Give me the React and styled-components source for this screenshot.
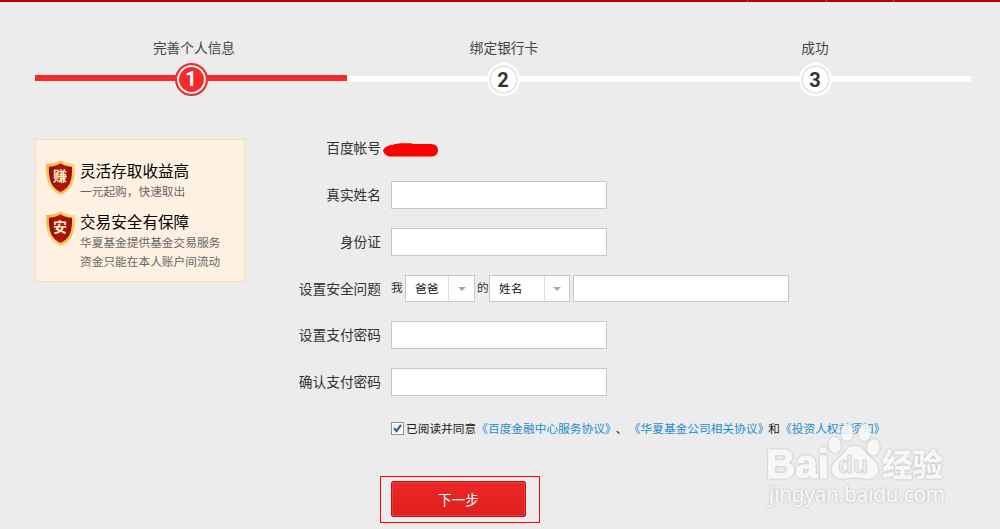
import React from "react";
import styled, { createGlobalStyle } from "styled-components";

const GlobalStyle = createGlobalStyle`
  * {
    box-sizing: border-box;
  }
  body {
    margin: 0;
    background: #ececec;
    color: #333;
    font-family: "Liberation Sans", "Noto Sans CJK SC", sans-serif;
    font-size: 11.7px;
  }
`;

const steps = [
  { title: "完善个人信息", active: true, shift: 3 },
  { title: "绑定银行卡", shift: 1 },
  { title: "成功", shift: 0 },
];

const Shield = ({ text }) => (
  <ShieldIcon width="30" height="35" viewBox="0 0 30 35">
    <defs>
      <linearGradient id="gold" x1="0" y1="0" x2="1" y2="1">
        <stop offset="0" stopColor="#f0a92e" />
        <stop offset="0.5" stopColor="#ffdc78" />
        <stop offset="1" stopColor="#f0a92e" />
      </linearGradient>
      <linearGradient id="red" x1="0" y1="0" x2="1" y2="0">
        <stop offset="0" stopColor="#8c0f0c" />
        <stop offset="0.5" stopColor="#b8140f" />
        <stop offset="1" stopColor="#930f0c" />
      </linearGradient>
    </defs>
    <path
      fill="url(#gold)"
      d="M14.500 0.3C10.500 2.9 5.500 4.2 0.3 4.1C0 12 0.2 19.5 3.3 25.2C5.8 29.7 9.8 33 14.5 34.8C19.2 33 23.2 29.7 25.7 25.2C28.8 19.5 29.1 12 28.7 4.1C23.5 4.2 18.5 2.9 14.5 0.3Z"
    />
    <path
      fill="url(#red)"
      d="M14.5 3.2C11.1 5.4 7 6.5 3 6.7C2.8 13 3.1 19 5.500 23.7C7.6 27.6 10.7 30.3 14.5 32C18.3 30.3 21.4 27.6 23.5 23.7C25.9 19 26.2 13 26 6.7C22 6.5 17.9 5.4 14.5 3.2Z"
    />
    <text x="14" y="20.5" textAnchor="middle" fontSize="14" fontWeight="bold" fill="#fff3c4">
      {text}
    </text>
  </ShieldIcon>
);

const Watermark = () => (
  <WatermarkLayer width="190" height="96" viewBox="760 420 190 96">
    <g
      fill="#f9f9f9"
      stroke="#f9f9f9"
      strokeWidth="1.4"
      strokeLinejoin="round"
      fontFamily="Liberation Sans"
      fontWeight="bold"
    >
      <text x="766" y="477.5" fontSize="41" textLength="63" lengthAdjust="spacingAndGlyphs">
        Bai
      </text>
      <g strokeWidth="0.4">
        <ellipse cx="834.7" cy="445" rx="6" ry="8" transform="rotate(-10 834.7 445)" />
        <ellipse cx="847" cy="432.5" rx="6" ry="8.5" />
        <ellipse cx="864.7" cy="432.5" rx="6" ry="8.5" transform="rotate(8 864.7 432.5)" />
        <ellipse cx="873.3" cy="447.5" rx="6.3" ry="8" transform="rotate(8 873.3 447.5)" />
        <path d="M854.5 446C848 446 846 451 842 455.5C837 460 831.5 463 832 470C832.5 477 839 479.5 845 478.5C852 477.3 857 477.3 864 478.5C871 479.5 878 477 878 469.5C878 462 871 459 867 454C863 449 861 446 854.5 446Z" />
      </g>
      <text
        x="838"
        y="472.5"
        fontSize="24"
        textLength="30"
        lengthAdjust="spacingAndGlyphs"
        fill="#efefef"
        stroke="#d2d2d2"
        strokeWidth="1"
      >
        du
      </text>
      <text x="882" y="475.5" fontSize="30.5" strokeWidth="0.6" fontFamily="Noto Sans CJK SC">
        经验
      </text>
    </g>
    <text
      x="769"
      y="502"
      fontSize="22"
      fontFamily="Noto Sans"
      textLength="176"
      lengthAdjust="spacingAndGlyphs"
      fill="#f9f9f9"
      stroke="#f9f9f9"
      strokeWidth="0.3"
    >
      jingyan.baidu.com
    </text>
  </WatermarkLayer>
);

const Select = ({ value, width, arrow }) => (
  <SelectBox $width={width}>
    <SelectValue>{value}</SelectValue>
    <SelectArrow $width={arrow}>
      <svg width="8" height="4" viewBox="0 0 8 4">
        <path d="M0 0H8L4 4Z" fill="#aaa" />
      </svg>
    </SelectArrow>
  </SelectBox>
);

export default function App() {
  return (
    <Page>
      <GlobalStyle />
      <TopBar>
        <TopCell $width={748} />
        <TopCell $width={79} />
        <TopCell $width={67} />
      </TopBar>

      <Steps>
        {steps.map((step, i) => (
          <Step key={step.title}>
            <StepTitle $shift={step.shift}>{step.title}</StepTitle>
            <StepTrack $active={step.active}>
              <StepNumber $active={step.active}>{i + 1}</StepNumber>
            </StepTrack>
          </Step>
        ))}
      </Steps>

      <Content>
        <Sidebar>
          <Feature>
            <Shield text="赚" />
            <div>
              <FeatureTitle>灵活存取收益高</FeatureTitle>
              <FeatureText>一元起购，快速取出</FeatureText>
            </div>
          </Feature>
          <Feature>
            <Shield text="安" />
            <div>
              <FeatureTitle>交易安全有保障</FeatureTitle>
              <FeatureText>华夏基金提供基金交易服务</FeatureText>
              <FeatureText>资金只能在本人账户间流动</FeatureText>
            </div>
          </Feature>
        </Sidebar>

        <Form>
          <Row>
            <Label>百度帐号</Label>
            <AccountMask width="56" height="14" viewBox="0 0 56 14">
              <path
                fill="#f00"
                d="M0 7.5C1 5 3.5 3 6 2.8L7.5 1.8L9 2.2C12 0.6 15 0.5 18 0.3L28 0.3L30 1H48C53 1 55 4 55 7C55 10.5 53 13.5 49 13.5H6C3 12.5 0.5 10.5 0 7.5Z"
              />
            </AccountMask>
          </Row>
          <Row>
            <Label>真实姓名</Label>
            <Input />
          </Row>
          <Row>
            <Label>身份证</Label>
            <Input />
          </Row>
          <Row $height={46}>
            <Label>设置安全问题</Label>
            <Question>
              <Word>我</Word>
              <Select value="爸爸" width={70} arrow={26} />
              <Word $indent={2}>的</Word>
              <Select value="姓名" width={81} arrow={25} />
              <AnswerInput />
            </Question>
          </Row>
          <Row>
            <Label>设置支付密码</Label>
            <Input type="password" />
          </Row>
          <Row>
            <Label>确认支付密码</Label>
            <Input type="password" />
          </Row>
          <Agreement>
            <CheckBox>
              <svg width="9" height="9" viewBox="0 0 9 9">
                <path d="M1 4.2L3.5 7.2L8 0.8" fill="none" stroke="#3b50a0" strokeWidth="2" />
              </svg>
            </CheckBox>
            已阅读并同意
            <DocLink>《百度金融中心服务协议》</DocLink>
            <Comma>、</Comma>
            <DocLink>《华夏基金公司相关协议》</DocLink>和
            <DocLink>《投资人权益须知》</DocLink>
          </Agreement>
          <ButtonFrame>
            <NextButton>下一步</NextButton>
          </ButtonFrame>
        </Form>
      </Content>
      <Watermark />
    </Page>
  );
}

const Page = styled.div`
  position: relative;
  width: 1000px;
  height: 529px;
  overflow: hidden;
  background: #ececec;
`;

const TopBar = styled.div`
  display: flex;
  height: 2px;
  background: #b90005;
`;

const TopCell = styled.div`
  width: ${(props) => props.$width}px;
  border-right: 1px solid #d2474a;
`;

const Steps = styled.div`
  display: flex;
  width: 936px;
  margin: 37px 0 0 35px;
`;

const Step = styled.div`
  flex: 1;
`;

const StepTitle = styled.div`
  height: 20px;
  padding-left: ${(props) => props.$shift * 2}px;
  font-size: 13.7px;
  line-height: 20px;
  text-align: center;
  color: #444;
`;

const StepTrack = styled.div`
  display: flex;
  align-items: center;
  justify-content: center;
  height: 6px;
  margin-top: ${(props) => (props.$active ? 16 : 17)}px;
  background: ${(props) => (props.$active ? "#f52b2b" : "#fff")};
`;

const StepNumber = styled.div`
  flex: none;
  width: 33px;
  height: 33px;
  margin-top: ${(props) => (props.$active ? 2 : 1)}px;
  border: 2px solid ${(props) => (props.$active ? "#f52b2b" : "#fff")};
  border-radius: 50%;
  background: ${(props) => (props.$active ? "#f52b2b" : "#fff")};
  box-shadow: inset 0 0 0 2px ${(props) => (props.$active ? "#fff" : "#e6e6e6")};
  color: ${(props) => (props.$active ? "#fff" : "#333")};
  font-family: Roboto, sans-serif;
  font-size: 20px;
  font-weight: bold;
  line-height: ${(props) => (props.$active ? 29 : 31)}px;
  text-align: center;
`;

const Content = styled.div`
  display: flex;
  align-items: flex-start;
  padding: 57px 0 0 35px;
`;

const Sidebar = styled.div`
  width: 210px;
  height: 143px;
  padding: 20px 0 0 10px;
  border: 1px solid #f7dab0;
  background: #fff1e2;
`;

const Feature = styled.div`
  display: flex;
  height: 51px;
`;

const ShieldIcon = styled.svg`
  flex: none;
  margin-right: 4px;
  font-family: "Noto Sans CJK SC", sans-serif;
`;

const FeatureTitle = styled.div`
  height: 22px;
  font-size: 15.6px;
  line-height: 24px;
  color: #000;
`;

const FeatureText = styled.div`
  height: 19px;
  line-height: 19px;
  color: #666;
  white-space: nowrap;
`;

const Form = styled.div`
  padding-left: 35px;
  margin-top: -5px;
`;

const Row = styled.div`
  display: flex;
  align-items: flex-start;
  height: ${(props) => props.$height || 47}px;
`;

const Label = styled.label`
  width: 101px;
  margin-right: 10px;
  font-size: 13.7px;
  line-height: 29px;
  text-align: right;
`;

const AccountMask = styled.svg`
  margin: 9px 0 0 -8px;
`;

const Input = styled.input`
  width: 216px;
  height: 28px;
  padding: 0 8px;
  border: 1px solid #c8c8c8;
  border-radius: 0;
  background: #fff;
  outline: none;
`;

const AnswerInput = styled(Input)`
  height: 27px;
  margin-left: 3px;
`;

const Question = styled.div`
  display: flex;
`;

const Word = styled.span`
  width: 14px;
  padding-left: ${(props) => props.$indent || 0}px;
  line-height: 26px;
  white-space: nowrap;
`;

const SelectBox = styled.div`
  display: flex;
  width: ${(props) => props.$width}px;
  height: 27px;
  border: 1px solid #c8c8c8;
  background: #fff;
`;

const SelectValue = styled.span`
  flex: 1;
  padding-left: 9px;
  line-height: 25px;
  color: #111;
`;

const SelectArrow = styled.span`
  display: flex;
  align-items: center;
  justify-content: center;
  width: ${(props) => props.$width}px;
  border-left: 1px solid #ddd;
`;

const Agreement = styled.div`
  display: flex;
  align-items: center;
  height: 28px;
  margin: -2px 0 0 111px;
  color: #222;
  white-space: nowrap;
`;

const CheckBox = styled.span`
  display: flex;
  align-items: center;
  justify-content: center;
  width: 13px;
  height: 13px;
  margin: 2px 2px 0 0;
  border: 1px solid #8e8f8f;
  background: #f4f4f4;
  box-shadow: inset 0 0 0 1px #fff;
`;

const DocLink = styled.a`
  margin: 0 5px 0 6px;
  color: #1a8fd0;
  font-feature-settings: "halt";
`;

const Comma = styled.span`
  width: 13px;
`;

const ButtonFrame = styled.div`
  width: 160px;
  height: 47px;
  margin: 35px 0 0 100px;
  padding: 4px 0 0 10px;
  border: 1px solid #f00;
`;

const NextButton = styled.button`
  display: block;
  width: 135px;
  height: 36px;
  padding: 0;
  border: 1px solid #c41217;
  border-radius: 2px;
  background: linear-gradient(#ec2727, #e01f1f);
  box-shadow: inset 0 0 0 1px #f03a3a;
  color: #fff;
  font-family: inherit;
  font-size: 13.7px;
`;

const WatermarkLayer = styled.svg`
  position: absolute;
  left: 760px;
  top: 420px;
  overflow: visible;
  opacity: 0.85;
  filter: drop-shadow(0 0 1px #a8a8a8);
`;
